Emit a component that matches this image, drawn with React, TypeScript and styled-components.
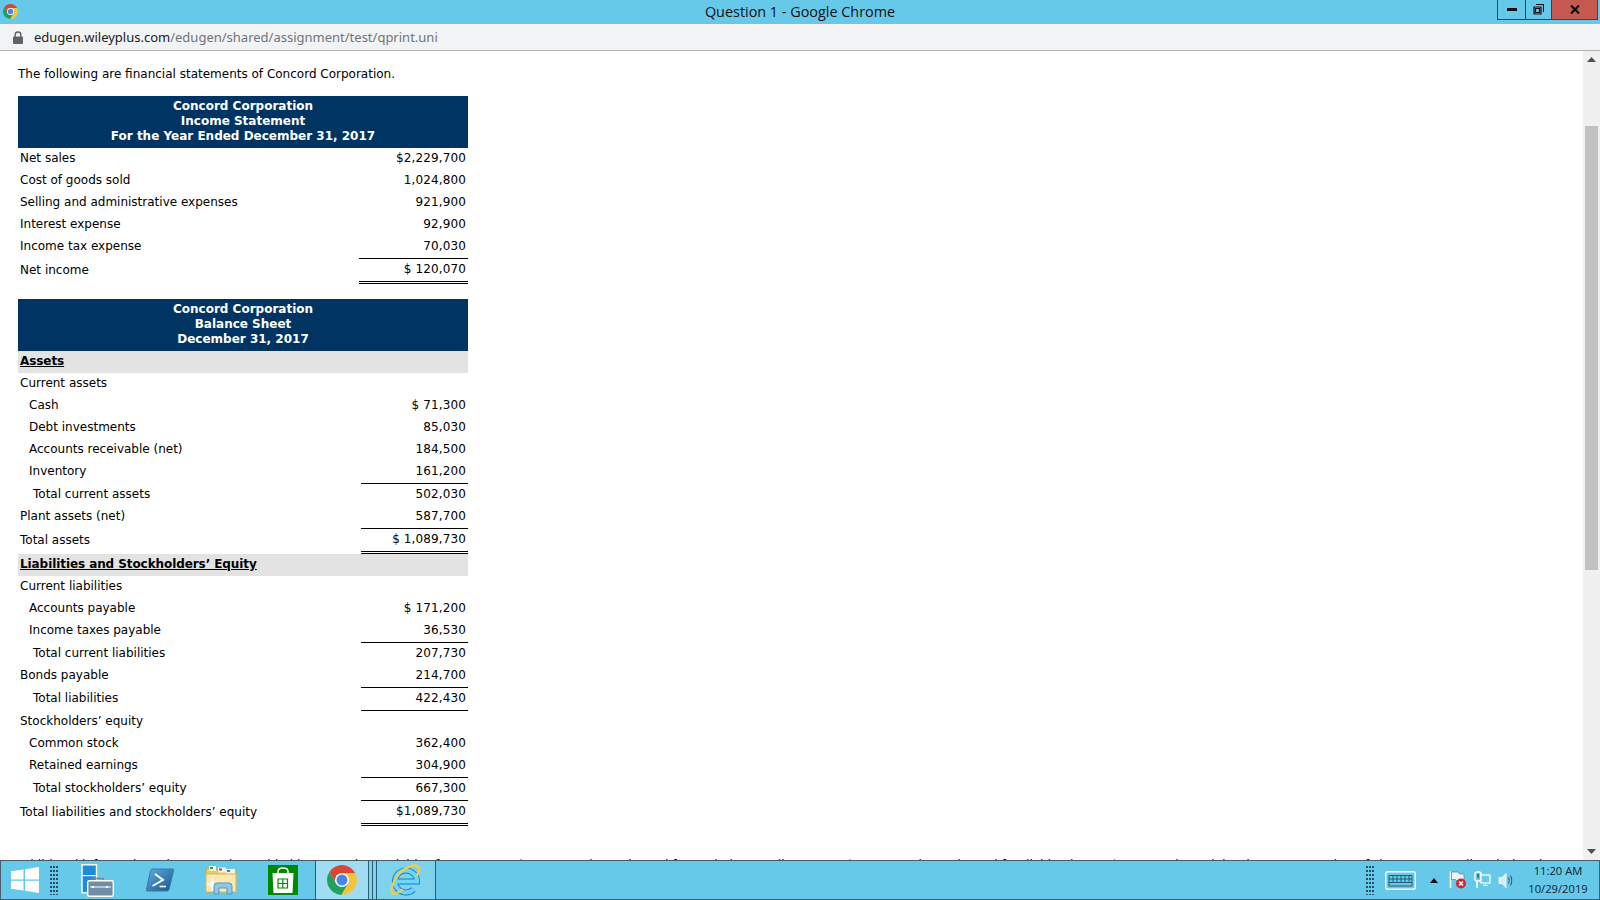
import { createGlobalStyle } from "styled-components";
import styled from "styled-components";

const Global = createGlobalStyle`
  * { box-sizing: border-box; }
  html, body { margin: 0; padding: 0; height: 100%; overflow: hidden; background: #fff; }
  #root { height: 100%; }
`;

const Screen = styled.div`
  width: 1600px;
  height: 900px;
  display: flex;
  flex-direction: column;
  overflow: hidden;
`;

const TitleBar = styled.div`
  height: 24px;
  flex: none;
  background: #66c9ea;
  border-bottom: 1px solid #9fb4bd;
  display: flex;
  position: relative;
  padding: 4px 2px 0 3px;
`;

const TitleText = styled.div`
  position: absolute;
  left: 0;
  right: 0;
  top: 1px;
  text-align: center;
  font: 14.4px/22px "Open Sans", sans-serif;
  color: #111;
`;

const WindowButtons = styled.div`
  margin-left: auto;
  display: flex;
  height: 20px;
  margin-top: -4px;
  border: 1px solid #27495a;
  border-top: none;
`;

const WindowButton = styled.div<{ $w: number; $close?: boolean }>`
  width: ${(p) => p.$w}px;
  display: flex;
  align-items: center;
  justify-content: center;
  background: ${(p) => (p.$close ? "#c75a50" : "transparent")};
  & + & { border-left: 1px solid #27495a; }
`;

const AddressBar = styled.div`
  height: 27px;
  flex: none;
  background: #f1f3f4;
  border-bottom: 1px solid #b4b4b4;
  display: flex;
  align-items: center;
  padding-left: 13px;
  font: 13px/26px "Noto Sans", sans-serif;
  color: #202124;
`;

const Lock = styled.svg`
  margin-right: 11px;
  flex: none;
`;

const Path = styled.span`
  color: #70757a;
`;

const Body = styled.div`
  flex: 1;
  min-height: 0;
  display: flex;
  background: #fff;
`;

const Content = styled.div`
  flex: 1;
  min-width: 0;
  overflow: hidden;
  padding: 16px 0 0 18px;
  font: 12px/15px "DejaVu Sans", Verdana, sans-serif;
  color: #000;
`;

const Intro = styled.p`
  margin: 0 0 14px;
  height: 15px;
`;

const Statement = styled.div`
  width: 450px;
  margin-bottom: 15px;
`;

const Head = styled.div`
  background: #003462;
  color: #fff;
  font-weight: 700;
  text-align: center;
  padding: 3px 0 4px;
`;

const Row = styled.div<{ $band?: boolean }>`
  display: flex;
  justify-content: space-between;
  align-items: center;
  background: ${(p) => (p.$band ? "#e3e3e3" : "transparent")};
`;

const Label = styled.div<{ $indent?: number }>`
  padding: 0 0 2px ${(p) => 2 + (p.$indent ?? 0)}px;
  line-height: 20px;
`;

const BandTitle = styled.div`
  padding: 0 0 2px 2px;
  line-height: 20px;
  font-weight: 700;
  letter-spacing: -0.08px;
  text-decoration: underline;
`;

const Amount = styled.div<{ $rule?: boolean; $double?: boolean; $end?: boolean; $w?: number }>`
  width: ${(p) => p.$w ?? 109}px;
  padding: 0 2px 2px 0;
  text-align: right;
  line-height: 20px;
  letter-spacing: 0.12px;
  border-top: ${(p) => (p.$rule ? "1px solid #000" : "none")};
  border-bottom: ${(p) => (p.$double ? "3px double #000" : p.$end ? "1px solid #000" : "none")};
`;

const Extra = styled.p`
  margin: 32px 0 0;
  white-space: nowrap;
`;

const Scrollbar = styled.div`
  width: 17px;
  flex: none;
  background: #f0f0f0;
  display: flex;
  flex-direction: column;
  align-items: center;
`;

const ScrollArrow = styled.div`
  height: 17px;
  flex: none;
  display: flex;
  align-items: center;
  justify-content: center;
`;

const Thumb = styled.div`
  width: 13px;
  height: 444px;
  margin-top: 58px;
  background: #c1c1c1;
  flex: none;
`;

const Spacer = styled.div`
  flex: 1;
`;

const Taskbar = styled.div`
  height: 40px;
  flex: none;
  background: #66c9ea;
  border: 1px solid #4b5c66;
  display: flex;
`;

const Slot = styled.div<{ $w: number; $tone?: string; $edge?: boolean; $start?: boolean }>`
  width: ${(p) => p.$w}px;
  flex: none;
  display: flex;
  align-items: center;
  justify-content: center;
  background: ${(p) => p.$tone ?? "transparent"};
  border-right: ${(p) => (p.$edge ? "1px solid #2c5a6e" : "none")};
  border-left: ${(p) => (p.$start ? "1px solid #2c5a6e" : "none")};
`;

const Tray = styled.div`
  margin-left: auto;
  display: flex;
  align-items: center;
`;

const Clock = styled.div`
  width: 70px;
  margin: 0 6px 0 5px;
  display: flex;
  flex-direction: column;
  gap: 2px;
  text-align: center;
  font: 11.2px/16px "Open Sans", sans-serif;
  color: #10222b;
`;

const ChromeMark = ({ size }: { size: number }) => (
  <svg width={size} height={size} viewBox="0 0 48 48">
    <path d="M24 13H45.3A24 24 0 0 0 3.82 11.05L14.47 29.5A11 11 0 0 1 24 13Z" fill="#db4437" />
    <path d="M45.3 13A24 24 0 0 1 22.88 47.95L33.53 29.5A11 11 0 0 0 24 13Z" fill="#f6c33a" />
    <path d="M22.88 47.95A24 24 0 0 1 3.82 11.05L14.47 29.5A11 11 0 0 0 33.53 29.5Z" fill="#23a15a" />
    <circle cx="24" cy="24" r="11" fill="#fff" />
    <circle cx="24" cy="24" r="8.8" fill="#4a86e8" />
  </svg>
);

const Dots = () => (
  <svg width="8" height="30" viewBox="0 0 8 30">
    {Array.from({ length: 8 }).flatMap((_, r) =>
      [0, 3, 6].map((c) => <rect key={`${r}-${c}`} x={c} y={r * 4 + 1} width="2" height="2" fill="#2d4f5f" />)
    )}
  </svg>
);

const WindowsLogo = () => (
  <svg width="28" height="26" viewBox="0 0 28 26">
    <path d="M0 4.2 12.5 2.4V12.4H0Z M14 2.2 28 0V12.4H14Z M0 13.8H12.5V23.6L0 21.8Z M14 13.8H28V26L14 23.8Z" fill="#fff" />
  </svg>
);

const ServerManager = () => (
  <svg width="33" height="33" viewBox="0 0 33 33">
    <rect x="1" y="0.8" width="14.5" height="28" fill="#1e8bdb" stroke="#fff" strokeWidth="1.4" />
    <rect x="2" y="11" width="12.5" height="1.2" fill="#fff" />
    <path d="M12 17V14.5H22V17" fill="none" stroke="#6b8aa0" strokeWidth="1.6" />
    <rect x="6.7" y="16.7" width="25.6" height="15.6" rx="1.5" fill="#6f8da5" stroke="#fff" strokeWidth="1.4" />
    <path d="M9 23H30" stroke="#fff" strokeWidth="1" />
    <rect x="11" y="22" width="2" height="2" fill="#fff" />
    <rect x="25" y="22" width="2" height="2" fill="#fff" />
  </svg>
);

const PowerShell = () => (
  <svg width="28" height="24" viewBox="0 0 28 24">
    <defs>
      <linearGradient id="ps" x1="0" y1="0" x2="1" y2="1">
        <stop offset="0" stopColor="#5fb0de" />
        <stop offset="1" stopColor="#14548f" />
      </linearGradient>
    </defs>
    <path d="M6 1H26.5Q28 1 27.6 2.5L23 21.5Q22.6 23 21 23H1.5Q0 23 .4 21.5L4.6 2.5Q5 1 6 1Z" fill="url(#ps)" stroke="#3f77a6" />
    <path d="M9 6 17 12 6.5 18" fill="none" stroke="#fff" strokeWidth="2" />
    <path d="M13.5 18.5H20" stroke="#fff" strokeWidth="1.6" />
  </svg>
);

const Explorer = () => (
  <svg width="32" height="30" viewBox="0 0 32 30">
    <path d="M1 3H10L12 5H31V27H1Z" fill="#e8c770" stroke="#c9a24f" />
    <rect x="4" y="1" width="7" height="5" fill="#f6f2dc" />
    <rect x="5" y="2" width="3" height="2" fill="#22a34a" />
    <rect x="13" y="2.5" width="8" height="5" fill="#f6f2dc" />
    <rect x="14" y="3.5" width="3" height="2" fill="#c8402f" />
    <rect x="21" y="4" width="9" height="5" fill="#f6f2dc" />
    <rect x="22" y="5" width="3" height="2" fill="#2a8ad8" />
    <path d="M1 9H31V27H1Z" fill="#fbeab0" stroke="#d7b764" />
    <path d="M5 18 8 12 9 18 14 19 9 21 8 27 6 21 1 19Z" fill="#fff" opacity="0.9" />
    <path d="M9 29V21Q9 18 12 18H24Q27 18 27 21V29H22V23H14V29Z" fill="#8ec8e8" stroke="#4c97c7" />
  </svg>
);

const Store = () => (
  <svg width="30" height="30" viewBox="0 0 30 30">
    <rect width="30" height="30" fill="#008a00" />
    <path d="M10 9V6.5Q10 3 15 3T20 6.5V9" fill="none" stroke="#fff" strokeWidth="1.5" />
    <path d="M4.5 8H25.5L24.5 28H5.5Z" fill="#fff" />
    <path d="M10 14H19.5V23H10ZM14.8 14V23M10 18.5H19.5" fill="none" stroke="#008a00" strokeWidth="1.2" />
  </svg>
);

const IEMark = () => (
  <svg width="32" height="34" viewBox="0 0 32 34">
    <path d="M6 18.5H27A11 11 0 1 0 23.5 26.5" fill="none" stroke="#1a7fc0" strokeWidth="6" />
    <path d="M6 18.5H27A11 11 0 1 0 23.5 26.5" fill="none" stroke="#6fd4f5" strokeWidth="4.2" />
    <path d="M28 3.5C24 .5 12 5 6 15 2 22 0 29 3 30.5 5 31.5 9 29 12 27M28 3.5C30 5 29.5 9 27 12" fill="none" stroke="#f3cb4a" strokeWidth="2.4" strokeLinecap="round" />
  </svg>
);

const KeyboardIcon = () => (
  <svg width="31" height="19" viewBox="0 0 31 19">
    <rect x="0.7" y="0.7" width="29.6" height="17.6" rx="2" fill="#66c9ea" stroke="#fff" strokeWidth="1.4" />
    <path d="M4 4.5H27M4 8H27M4 11.5H27M4 15H27M4 4.5V15M8 4.5V11.5M12 4.5V11.5M16 4.5V11.5M20 4.5V11.5M24 4.5V11.5M27 4.5V15" stroke="#17485c" strokeWidth="0.8" fill="none" />
  </svg>
);

const UpCaret = () => (
  <svg width="8" height="5" viewBox="0 0 8 5">
    <path d="M0 5 4 0 8 5Z" fill="#111" />
  </svg>
);

const FlagIcon = () => (
  <svg width="18" height="18" viewBox="0 0 18 18">
    <path d="M1.5 0.5V17" stroke="#fff" strokeWidth="1.6" />
    <path d="M2.5 1H9L10.5 3H15V10H8L6.5 8.5H2.5Z" fill="#e8f4f8" stroke="#51707d" strokeWidth="0.6" />
    <circle cx="12" cy="12.5" r="5" fill="#d8232a" />
    <path d="M10 10.5 14 14.5M14 10.5 10 14.5" stroke="#fff" strokeWidth="1.6" />
  </svg>
);

const NetworkIcon = () => (
  <svg width="17" height="18" viewBox="0 0 17 18">
    <rect x="1" y="1" width="6" height="9" rx="2" fill="none" stroke="#fff" strokeWidth="1.4" />
    <path d="M3 4H5M3 6H5" stroke="#123" strokeWidth="1" />
    <path d="M3 10V17" stroke="#fff" strokeWidth="1.6" />
    <rect x="7" y="4" width="9" height="8" fill="#66c9ea" stroke="#fff" strokeWidth="1.2" />
    <path d="M9 14.5H14M11.5 12V14.5" stroke="#fff" strokeWidth="1.2" />
  </svg>
);

const SpeakerIcon = () => (
  <svg width="17" height="17" viewBox="0 0 17 17">
    <path d="M1 5.5H4L8 1.5V15.5L4 11.5H1Z" fill="#d8ecf3" stroke="#fff" strokeWidth="0.8" />
    <path d="M10.5 5.5Q12 8.5 10.5 11.5M12.5 3.5Q15 8.5 12.5 13.5" fill="none" stroke="#2c5d72" strokeWidth="1.1" />
  </svg>
);

const Caret = ({ down }: { down?: boolean }) => (
  <svg width="9" height="5" viewBox="0 0 9 5">
    <path d={down ? "M0 0H9L4.5 5Z" : "M0 5H9L4.5 0Z"} fill="#505050" />
  </svg>
);

type Line = {
  label: string;
  amount?: string;
  indent?: number;
  rule?: boolean;
  double?: boolean;
  end?: boolean;
  band?: boolean;
};

const income: Line[] = [
  { label: "Net sales", amount: "$2,229,700" },
  { label: "Cost of goods sold", amount: "1,024,800" },
  { label: "Selling and administrative expenses", amount: "921,900" },
  { label: "Interest expense", amount: "92,900" },
  { label: "Income tax expense", amount: "70,030" },
  { label: "Net income", amount: "$ 120,070", rule: true, double: true },
];

const balance: Line[] = [
  { label: "Assets", band: true },
  { label: "Current assets" },
  { label: "Cash", amount: "$ 71,300", indent: 9 },
  { label: "Debt investments", amount: "85,030", indent: 9 },
  { label: "Accounts receivable (net)", amount: "184,500", indent: 9 },
  { label: "Inventory", amount: "161,200", indent: 9 },
  { label: "Total current assets", amount: "502,030", indent: 13, rule: true },
  { label: "Plant assets (net)", amount: "587,700" },
  { label: "Total assets", amount: "$ 1,089,730", rule: true, double: true },
  { label: "Liabilities and Stockholders’ Equity", band: true },
  { label: "Current liabilities" },
  { label: "Accounts payable", amount: "$ 171,200", indent: 9 },
  { label: "Income taxes payable", amount: "36,530", indent: 9 },
  { label: "Total current liabilities", amount: "207,730", indent: 13, rule: true },
  { label: "Bonds payable", amount: "214,700" },
  { label: "Total liabilities", amount: "422,430", indent: 13, rule: true, end: true },
  { label: "Stockholders’ equity" },
  { label: "Common stock", amount: "362,400", indent: 9 },
  { label: "Retained earnings", amount: "304,900", indent: 9 },
  { label: "Total stockholders’ equity", amount: "667,300", indent: 13, rule: true },
  { label: "Total liabilities and stockholders’ equity", amount: "$1,089,730", rule: true, double: true },
];

const Lines = ({ lines, w }: { lines: Line[]; w: number }) => (
  <>
    {lines.map((l) =>
      l.band ? (
        <Row key={l.label} $band>
          <BandTitle>{l.label}</BandTitle>
        </Row>
      ) : (
        <Row key={l.label}>
          <Label $indent={l.indent}>{l.label}</Label>
          {l.amount && (
            <Amount $w={w} $rule={l.rule} $double={l.double} $end={l.end}>
              {l.amount}
            </Amount>
          )}
        </Row>
      )
    )}
  </>
);

export default function App() {
  return (
    <Screen>
      <Global />
      <TitleBar>
        <ChromeMark size={15} />
        <TitleText>Question 1 - Google Chrome</TitleText>
        <WindowButtons>
          <WindowButton $w={27}>
            <svg width="10" height="3" viewBox="0 0 10 3">
              <rect width="10" height="3" fill="#111" />
            </svg>
          </WindowButton>
          <WindowButton $w={26}>
            <svg width="11" height="11" viewBox="0 0 11 11">
              <path d="M3 0.5H10.5V8M1 3H8V10H1ZM2.5 4.5H6.5V8.5H2.5Z" fill="none" stroke="#111" strokeWidth="1.2" />
            </svg>
          </WindowButton>
          <WindowButton $w={46} $close>
            <svg width="10" height="9" viewBox="0 0 10 9">
              <path d="M1 0.5 9 8.5M9 0.5 1 8.5" stroke="#111" strokeWidth="2.2" />
            </svg>
          </WindowButton>
        </WindowButtons>
      </TitleBar>
      <AddressBar>
        <Lock width="10" height="13" viewBox="0 0 10 13">
          <path d="M2.2 6V3.8a2.8 2.8 0 0 1 5.6 0V6" fill="none" stroke="#5f6368" strokeWidth="1.4" />
          <rect y="5.5" width="10" height="7.5" rx="1" fill="#5f6368" />
        </Lock>
        edugen.wileyplus.com<Path>/edugen/shared/assignment/test/qprint.uni</Path>
      </AddressBar>
      <Body>
        <Content>
          <Intro>The following are financial statements of Concord Corporation.</Intro>
          <Statement>
            <Head>
              Concord Corporation
              <br />
              Income Statement
              <br />
              For the Year Ended December 31, 2017
            </Head>
            <Lines lines={income} w={109} />
          </Statement>
          <Statement>
            <Head>
              Concord Corporation
              <br />
              Balance Sheet
              <br />
              December 31, 2017
            </Head>
            <Lines lines={balance} w={107} />
          </Statement>
          <Extra>
            Additional information: The net cash provided by operating activities for 2017 was $305,300. The cash used
            for capital expenditures was $104,400. The cash used for dividends was $62,050. The weighted-average number
            of shares outstanding during the year was
          </Extra>
        </Content>
        <Scrollbar>
          <ScrollArrow>
            <Caret />
          </ScrollArrow>
          <Thumb />
          <Spacer />
          <ScrollArrow>
            <Caret down />
          </ScrollArrow>
        </Scrollbar>
      </Body>
      <Taskbar>
        <Slot $w={47}>
          <WindowsLogo />
        </Slot>
        <Slot $w={12}>
          <Dots />
        </Slot>
        <Slot $w={74}>
          <ServerManager />
        </Slot>
        <Slot $w={52}>
          <PowerShell />
        </Slot>
        <Slot $w={70}>
          <Explorer />
        </Slot>
        <Slot $w={54}>
          <Store />
        </Slot>
        <Slot $w={5} />
        <Slot $w={54} $tone="#a0dcf2" $edge $start>
          <ChromeMark size={30} />
        </Slot>
        <Slot $w={4} $tone="#7dd2ee" $edge />
        <Slot $w={4} $tone="#7dd2ee" $edge />
        <Slot $w={59} $tone="#7dd2ee" $edge>
          <IEMark />
        </Slot>
        <Tray>
          <Slot $w={16}>
            <Dots />
          </Slot>
          <Slot $w={44}>
            <KeyboardIcon />
          </Slot>
          <Slot $w={24}>
            <UpCaret />
          </Slot>
          <Slot $w={24}>
            <FlagIcon />
          </Slot>
          <Slot $w={24}>
            <NetworkIcon />
          </Slot>
          <Slot $w={24}>
            <SpeakerIcon />
          </Slot>
          <Clock>
            <span>11:20 AM</span>
            <span>10/29/2019</span>
          </Clock>
        </Tray>
      </Taskbar>
    </Screen>
  );
}
